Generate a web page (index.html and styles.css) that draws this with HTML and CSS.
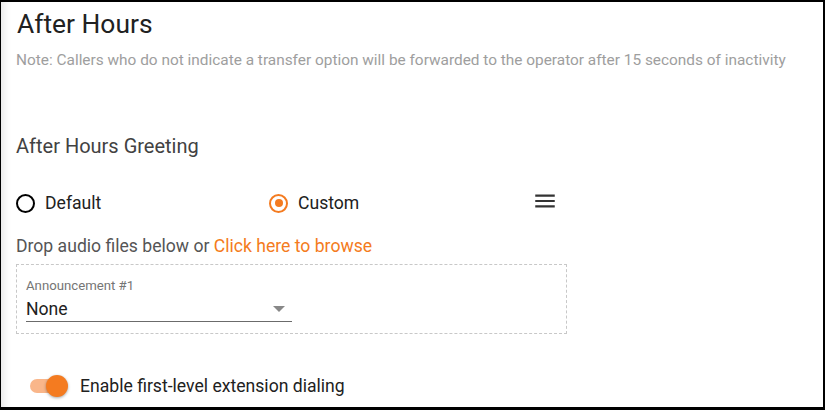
FILE: index.html
```html
<!DOCTYPE html>
<html>
<head>
<meta charset="utf-8">
<link rel="stylesheet" href="styles.css">
</head>
<body>
<div class="frame">
  <h1 class="title">After Hours</h1>
  <p class="note">Note: Callers who do not indicate a transfer option will be forwarded to the operator after 15 seconds of inactivity</p>
  <h2 class="section">After Hours Greeting</h2>
  <div class="radios">
    <label class="radio"><span class="circle"></span><span>Default</span></label>
    <label class="radio checked"><span class="circle"></span><span>Custom</span></label>
    <svg class="menu" width="26" height="26" viewBox="0 0 24 24"><path d="M3 18h18v-2H3v2zm0-5h18v-2H3v2zm0-7v2h18V6H3z" fill="#333"/></svg>
  </div>
  <p class="drop">Drop audio files below or <a class="link">Click here to browse</a></p>
  <div class="dropbox">
    <div class="field">
      <div class="label">Announcement #1</div>
      <div class="select"><span>None</span><span class="arrow"></span></div>
    </div>
  </div>
  <div class="toggle-row">
    <span class="toggle"><span class="track"></span><span class="thumb"></span></span>
    <span class="toggle-text">Enable first-level extension dialing</span>
  </div>
</div>
</body>
</html>
```

FILE: styles.css
```css
html, body { margin: 0; padding: 0; background: #000; }
body { width: 825px; height: 410px; overflow: hidden; }
.frame {
  box-sizing: border-box;
  width: 822px;
  height: 405px;
  margin: 2px 0 0 1px;
  background: #fff;
  box-shadow: inset 10px 0 10px -8px rgba(0,0,0,0.12);
  padding: 0 16px 0 15px;
  font-family: Roboto, "Noto Sans", sans-serif;
  overflow: hidden;
}
.title { margin: 0 0 0 1px; padding-top: 7px; font-size: 26.4px; font-weight: 400; color: #212121; line-height: 30px; }
.note { margin: 12px 0 0; font-size: 15.4px; color: #9e9e9e; line-height: 18px; }
.section { margin: 65px 0 0; font-size: 20px; font-weight: 400; color: #424242; line-height: 24px; }
.radios { display: flex; align-items: center; margin-top: 32px; height: 26px; }
.radio { display: flex; align-items: center; gap: 10px; font-size: 17.6px; color: #212121; width: 253px; }
.circle { box-sizing: border-box; width: 19px; height: 19px; border: 2px solid #000; border-radius: 50%; position: relative; }
.checked .circle { border-color: #f47b20; }
.checked .circle::after { content: ""; position: absolute; left: 3.5px; top: 3.5px; width: 8px; height: 8px; border-radius: 50%; background: #f47b20; }
.menu { margin-left: 10px; margin-top: -4px; }
.drop { margin: 19px 0 0; font-size: 17.6px; color: #555; line-height: 22px; }
.link { color: #f47b20; }
.dropbox { box-sizing: border-box; margin-top: 7px; width: 551px; height: 70px; border: 1px dashed #c8c8c8; padding: 13px 0 0 9px; }
.label { font-size: 13.2px; color: #757575; line-height: 15px; }
.select { display: flex; align-items: center; justify-content: space-between; width: 266px; height: 24px; border-bottom: 1px solid #6b6b6b; font-size: 17.6px; color: #212121; padding-top: 4px; box-sizing: content-box; }
.arrow { width: 0; height: 0; border-left: 6px solid transparent; border-right: 6px solid transparent; border-top: 6px solid #888; margin-right: 7px; }
.toggle-row { display: flex; align-items: center; margin-top: 39px; margin-left: 14px; height: 26px; }
.toggle { position: relative; width: 40px; height: 26px; }
.track { position: absolute; left: 0; top: 6px; width: 34px; height: 14px; border-radius: 7px; background: #f9b68a; }
.thumb { position: absolute; left: 16px; top: 2px; width: 22px; height: 22px; border-radius: 50%; background: #f47b20; box-shadow: 0 1px 3px rgba(0,0,0,0.35); }
.toggle-text { margin-left: 10px; font-size: 17.6px; color: #212121; }
```
